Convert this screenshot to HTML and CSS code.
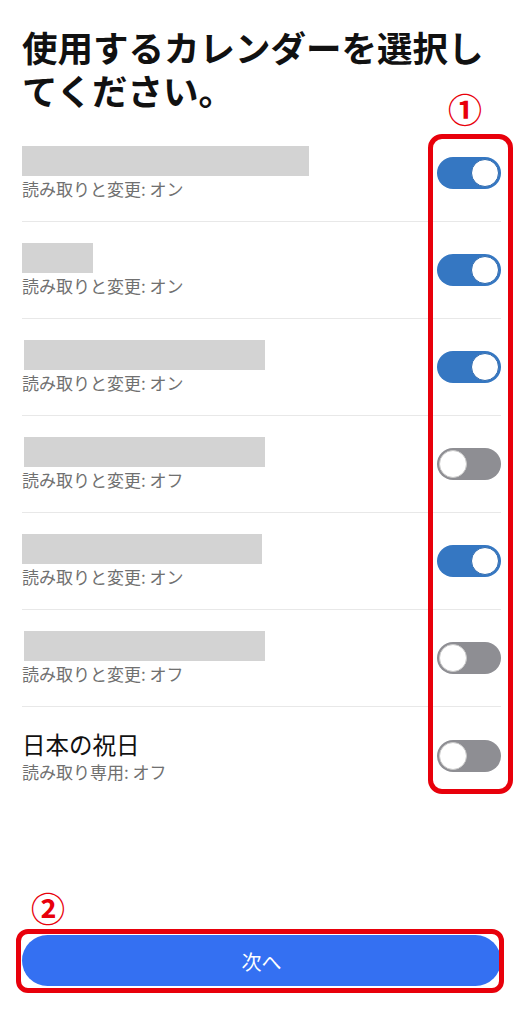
FILE: index.html
```html
<!DOCTYPE html>
<html lang="ja">
<head>
  <meta charset="UTF-8" />
  <meta name="viewport" content="width=device-width, initial-scale=1.0"/>
  <title>カレンダーを選択</title>
  <link rel="stylesheet" href="styles.css">
</head>
<body>

  <h1 class="heading">使用するカレンダーを選択してください。</h1>

  <!-- Calendar list -->
  <div class="list">
    <div class="row">
      <div class="info">
        <div class="name"><span class="mask" style="width:287px;margin-left:0"></span></div>
        <div class="perm">読み取りと変更: オン</div>
      </div>
      <span class="toggle on"></span>
    </div>
    <div class="row">
      <div class="info">
        <div class="name"><span class="mask" style="width:71px;margin-left:0"></span></div>
        <div class="perm">読み取りと変更: オン</div>
      </div>
      <span class="toggle on"></span>
    </div>
    <div class="row">
      <div class="info">
        <div class="name"><span class="mask" style="width:241px;margin-left:2px"></span></div>
        <div class="perm">読み取りと変更: オン</div>
      </div>
      <span class="toggle on"></span>
    </div>
    <div class="row">
      <div class="info">
        <div class="name"><span class="mask" style="width:241px;margin-left:2px"></span></div>
        <div class="perm">読み取りと変更: オフ</div>
      </div>
      <span class="toggle"></span>
    </div>
    <div class="row">
      <div class="info">
        <div class="name"><span class="mask" style="width:240px;margin-left:0"></span></div>
        <div class="perm">読み取りと変更: オン</div>
      </div>
      <span class="toggle on"></span>
    </div>
    <div class="row">
      <div class="info">
        <div class="name"><span class="mask" style="width:241px;margin-left:2px"></span></div>
        <div class="perm">読み取りと変更: オフ</div>
      </div>
      <span class="toggle"></span>
    </div>
    <div class="row">
      <div class="info">
        <div class="name">日本の祝日</div>
        <div class="perm">読み取り専用: オフ</div>
      </div>
      <span class="toggle"></span>
    </div>
  </div>

  <button class="next">次へ</button>

  <!-- annotations -->
  <span class="mark mark-1">①</span>
  <div class="frame frame-toggles"></div>
  <span class="mark mark-2">②</span>
  <div class="frame frame-button"></div>

</body>
</html>
```

FILE: styles.css
```css
body {
  margin: 0;
  padding: 0 22px 0 22px;
  background: #fff;
  color: #111;
  font-family: "Noto Sans CJK JP", "Noto Sans", sans-serif;
  position: relative;
  height: 1024px;
  box-sizing: border-box;
  overflow: hidden;
}

.heading {
  margin: 25px 0 0 0;
  font-size: 35.5px;
  line-height: 43px;
  font-weight: 700;
  color: #111;
}

.list {
  margin-top: 14px;
}

.row {
  display: flex;
  align-items: center;
  justify-content: space-between;
  height: 97px;
  border-bottom: 1px solid #e8e8e8;
  box-sizing: border-box;
}

.row:last-child {
  border-bottom: none;
}

.info {
  display: flex;
  flex-direction: column;
}

.name {
  font-size: 23.5px;
  line-height: 32px;
  height: 32px;
  color: #111;
  display: flex;
  align-items: center;
}

.mask {
  display: block;
  height: 30px;
  background: #d3d3d3;
}

.perm {
  font-size: 17px;
  line-height: 24px;
  color: #707070;
}

.toggle {
  position: relative;
  width: 64px;
  height: 32px;
  border-radius: 16px;
  background: #8e8e93;
  flex-shrink: 0;
}

.toggle::after {
  content: "";
  position: absolute;
  top: 2px;
  left: 2px;
  width: 26px;
  height: 26px;
  border-radius: 50%;
  background: #fff;
  border: 1px solid #c8c8c8;
}

.toggle.on {
  background: #3577c2;
}

.toggle.on::after {
  left: auto;
  right: 2px;
  border-color: #2f6aae;
}

.next {
  display: block;
  width: 100%;
  height: 51px;
  margin-top: 131px;
  border: none;
  border-radius: 26px;
  background: #3470f2;
  color: #fff;
  font-family: inherit;
  font-size: 20px;
  padding-top: 3px;
}

/* red annotation overlays */
.mark {
  position: absolute;
  color: #e8000b;
  font-size: 34px;
  font-weight: 700;
  line-height: 30px;
}

.mark-1 {
  left: 448px;
  top: 94px;
}

.mark-2 {
  left: 31px;
  top: 893px;
}

.frame {
  position: absolute;
  border: 5px solid #e8000b;
  box-sizing: border-box;
}

.frame-toggles {
  left: 428px;
  top: 134px;
  width: 85px;
  height: 660px;
  border-radius: 14px;
}

.frame-button {
  left: 16px;
  top: 929px;
  width: 488px;
  height: 64px;
  border-radius: 12px;
}
```
